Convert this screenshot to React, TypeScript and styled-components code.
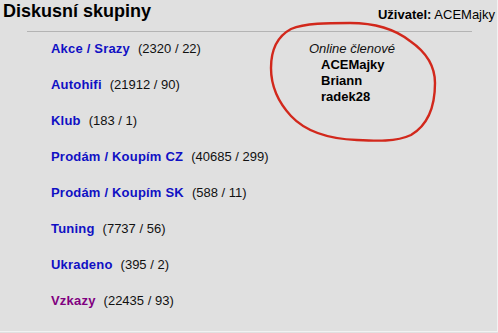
import styled, { createGlobalStyle } from "styled-components";

const GlobalStyle = createGlobalStyle`
  html, body {
    margin: 0;
    padding: 0;
    background: #e0e0e0;
  }
  body {
    font-family: "Liberation Sans", Arial, sans-serif;
    color: #111;
  }
`;

type Group = { name: string; posts: number; threads: number; visited?: boolean };

const groups: Group[] = [
  { name: "Akce / Srazy", posts: 2320, threads: 22 },
  { name: "Autohifi", posts: 21912, threads: 90 },
  { name: "Klub", posts: 183, threads: 1 },
  { name: "Prodám / Koupím CZ", posts: 40685, threads: 299 },
  { name: "Prodám / Koupím SK", posts: 588, threads: 11 },
  { name: "Tuning", posts: 7737, threads: 56 },
  { name: "Ukradeno", posts: 395, threads: 2 },
  { name: "Vzkazy", posts: 22435, threads: 93, visited: true },
];

const online = ["ACEMajky", "Briann", "radek28"];

export default function App() {
  return (
    <>
      <GlobalStyle />
      <Page>
        <Header>
          <Title>Diskusní skupiny</Title>
          <User>
            <b>Uživatel:</b> ACEMajky
          </User>
        </Header>
        <Rule />
        <Content>
          <List>
            {groups.map((g) => (
              <Row key={g.name}>
                <GroupLink href="#" $visited={g.visited}>
                  {g.name}
                </GroupLink>
                <Count>
                  ({g.posts} / {g.threads})
                </Count>
              </Row>
            ))}
          </List>
          <Online>
            <OnlineTitle>Online členové</OnlineTitle>
            {online.map((n) => (
              <Member key={n}>{n}</Member>
            ))}
          </Online>
        </Content>
        <Scribble viewBox="0 0 498 333" width="498" height="333">
          <path
            d="M 350 23 C 375 23, 396 30, 410 41 C 426 52, 435 66, 435 83 C 435 106, 428 125, 411 135 C 396 142, 376 141, 357 140 C 331 139, 306 132, 291 116 C 279 103, 271 86, 271 68 C 271 50, 278 36, 291 29 C 305 23, 328 23, 350 23 Z"
            fill="none"
            stroke="#d2281c"
            strokeWidth="2.4"
            strokeLinejoin="round"
          />
        </Scribble>
      </Page>
    </>
  );
}

const Page = styled.div`
  position: relative;
  width: 497px;
  height: 331px;
  border-right: 1px solid #f2f2f2;
  border-bottom: 1px solid #f2f2f2;
  overflow: hidden;
`;

const Header = styled.div`
  display: flex;
  justify-content: space-between;
  align-items: flex-end;
  padding: 0 2px 0 3px;
  height: 23px;
`;

const Title = styled.h1`
  margin: 0 0 2px;
  font-size: 18px;
  line-height: 20px;
  font-weight: bold;
  color: #000;
`;

const User = styled.div`
  font-size: 13px;
  line-height: 16px;
  margin-bottom: 0;
  color: #000;

  b {
    font-weight: bold;
  }
`;

const Rule = styled.div`
  margin: 8px 0 0 27px;
  width: 445px;
  height: 1px;
  background: #b4b4b4;
`;

const Content = styled.div`
  display: grid;
  grid-template-columns: 309px 1fr;
  padding-top: 9px;
`;

const List = styled.div`
  display: flex;
  flex-direction: column;
  gap: 20px;
  padding-left: 51px;
`;

const Row = styled.div`
  display: flex;
  align-items: baseline;
  gap: 8px;
  font-size: 13px;
  line-height: 16px;
  white-space: nowrap;
`;

const GroupLink = styled.a<{ $visited?: boolean }>`
  font-weight: bold;
  letter-spacing: 0.2px;
  text-decoration: none;
  color: ${(p) => (p.$visited ? "#800080" : "#1010c4")};
`;

const Count = styled.span`
  color: #111;
`;

const Online = styled.div`
  display: flex;
  flex-direction: column;
  font-size: 13px;
  line-height: 16px;
`;

const OnlineTitle = styled.span`
  font-style: italic;
  color: #111;
`;

const Member = styled.span`
  font-weight: bold;
  padding-left: 12px;
  color: #000;
`;

const Scribble = styled.svg`
  position: absolute;
  left: 0;
  top: 0;
  pointer-events: none;
`;
